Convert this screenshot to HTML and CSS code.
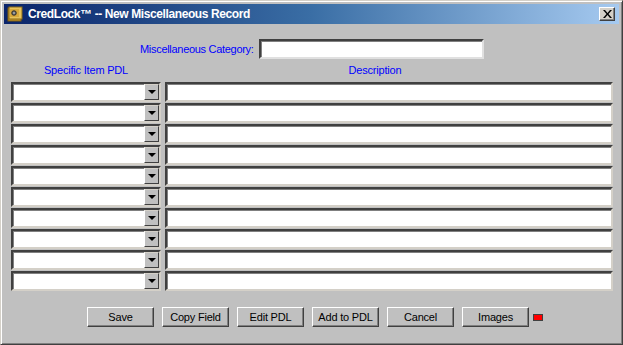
FILE: index.html
```html
<!DOCTYPE html>
<html lang="en">
<head>
  <meta charset="UTF-8" />
  <title>CredLock - New Miscellaneous Record</title>
  <link rel="stylesheet" href="styles.css">
</head>
<body>
  <div class="window">
    <div class="titlebar">
      <svg class="app-icon" width="16" height="16" viewBox="0 0 16 16">
        <rect x="1" y="2" width="13" height="13" fill="#c89b2c" stroke="#7a5a10" />
        <rect x="2" y="1" width="13" height="12" fill="#e8c35a" stroke="#8a6a18" />
        <rect x="3" y="3" width="9" height="8" fill="#d8a93c" />
        <circle cx="7" cy="7" r="2.3" fill="#666" stroke="#222" stroke-width="0.8" />
        <circle cx="7" cy="7" r="0.8" fill="#ddd" />
      </svg>
      <span class="title">CredLock™ -- New Miscellaneous Record</span>
      <button class="close-btn">
        <svg width="9" height="8" viewBox="0 0 9 8">
          <path d="M0 0h2l2.5 3 2.5-3h2L5.5 4 9 8H7L4.5 5 2 8H0l3.5-4z" fill="#000" />
        </svg>
      </button>
    </div>

    <div class="content">
      <div class="category-row">
        <label for="category">Miscellaneous Category:</label>
        <input type="text" id="category" class="field category-field" />
      </div>

      <div class="grid">
        <div class="col-head">Specific Item PDL</div>
        <div class="col-head desc-head">Description</div>

        <div class="combo"><span class="combo-text"></span><span class="combo-btn"><i></i></span></div>
        <input type="text" class="field" />
        <div class="combo"><span class="combo-text"></span><span class="combo-btn"><i></i></span></div>
        <input type="text" class="field" />
        <div class="combo"><span class="combo-text"></span><span class="combo-btn"><i></i></span></div>
        <input type="text" class="field" />
        <div class="combo"><span class="combo-text"></span><span class="combo-btn"><i></i></span></div>
        <input type="text" class="field" />
        <div class="combo"><span class="combo-text"></span><span class="combo-btn"><i></i></span></div>
        <input type="text" class="field" />
        <div class="combo"><span class="combo-text"></span><span class="combo-btn"><i></i></span></div>
        <input type="text" class="field" />
        <div class="combo"><span class="combo-text"></span><span class="combo-btn"><i></i></span></div>
        <input type="text" class="field" />
        <div class="combo"><span class="combo-text"></span><span class="combo-btn"><i></i></span></div>
        <input type="text" class="field" />
        <div class="combo"><span class="combo-text"></span><span class="combo-btn"><i></i></span></div>
        <input type="text" class="field" />
        <div class="combo"><span class="combo-text"></span><span class="combo-btn"><i></i></span></div>
        <input type="text" class="field" />
      </div>

      <div class="buttons">
        <button class="btn">Save</button>
        <button class="btn">Copy Field</button>
        <button class="btn">Edit PDL</button>
        <button class="btn">Add to PDL</button>
        <button class="btn">Cancel</button>
        <button class="btn">Images</button>
        <span class="led"></span>
      </div>
    </div>
  </div>
</body>
</html>
```
FILE: styles.css
```css
body {
  margin: 0;
  padding: 0;
  background: #c0c0c0;
  font-family: "Liberation Sans", Arial, sans-serif;
}

.window {
  width: 623px;
  height: 345px;
  box-sizing: border-box;
  background: #c0c0c0;
  border-top: 1px solid #d4d0c8;
  border-left: 1px solid #d4d0c8;
  border-right: 1px solid #404040;
  border-bottom: 1px solid #404040;
  box-shadow: inset 1px 1px 0 #ffffff, inset -1px -1px 0 #808080;
  padding: 2px 3px 2px 2px;
  display: flex;
  flex-direction: column;
}

.titlebar {
  height: 20px;
  display: flex;
  align-items: center;
  padding: 0 2px 0 3px;
  background: linear-gradient(to right, #0a246a, #3a6ea5 50%, #a6caf0);
  margin: 1px 0 0 1px;
}

.app-icon {
  flex: none;
  margin-right: 5px;
}

.title {
  color: #ffffff;
  font-weight: bold;
  font-size: 12px;
  letter-spacing: -0.4px;
  flex: 1;
}

.close-btn {
  width: 16px;
  height: 14px;
  padding: 0;
  background: #d4d0c8;
  border: 1px solid;
  border-color: #ffffff #404040 #404040 #ffffff;
  box-shadow: inset -1px -1px 0 #808080;
  display: flex;
  align-items: center;
  justify-content: center;
  margin-right: 2px;
}

.content {
  flex: 1;
  padding: 0 6px 0 8px;
  display: flex;
  flex-direction: column;
}

.category-row {
  display: flex;
  align-items: center;
  margin-top: 15px;
  padding-left: 129px;
}

.category-row label {
  color: #0000ff;
  font-size: 11px;
  letter-spacing: -0.3px;
  margin-right: 5px;
}

.field {
  box-sizing: border-box;
  height: 20px;
  margin: 0;
  padding: 1px 3px;
  background: #ffffff;
  border: 2px solid;
  border-color: #404040 #d4d0c8 #d4d0c8 #404040;
  box-shadow: inset 1px 1px 0 #808080;
  font-family: "Liberation Sans", Arial, sans-serif;
  font-size: 12px;
  outline: none;
}

.category-field {
  width: 225px;
  border-color: #404040 #e0e0e0 #e0e0e0 #404040;
}

.grid {
  display: grid;
  grid-template-columns: 150px 1fr;
  column-gap: 4px;
  row-gap: 1px;
  margin-top: 4px;
}

.col-head {
  color: #0000ff;
  font-size: 11px;
  letter-spacing: -0.2px;
  text-align: center;
  height: 15px;
  line-height: 15px;
  margin-bottom: 3px;
}

.desc-head {
  padding-right: 28px;
}

.grid .field {
  width: 100%;
  height: 20px;
}

.combo {
  box-sizing: border-box;
  height: 20px;
  display: flex;
  background: #ffffff;
  border: 2px solid;
  border-color: #404040 #d4d0c8 #d4d0c8 #404040;
  box-shadow: inset 1px 1px 0 #808080;
}

.combo-text {
  flex: 1;
}

.combo-btn {
  width: 15px;
  box-sizing: border-box;
  background: #c0c0c0;
  border: 1px solid;
  border-color: #d4d0c8 #404040 #404040 #ffffff;
  display: flex;
  align-items: center;
  justify-content: center;
}

.combo-btn i {
  width: 0;
  height: 0;
  border-left: 4px solid transparent;
  border-right: 4px solid transparent;
  border-top: 4px solid #000000;
}

.buttons {
  display: flex;
  align-items: center;
  gap: 8px;
  margin-top: 16px;
  padding-left: 76px;
}

.btn {
  width: 67px;
  height: 20px;
  padding: 0;
  background: #c0c0c0;
  border: 1px solid;
  border-color: #ffffff #404040 #404040 #ffffff;
  box-shadow: inset -1px -1px 0 #808080;
  font-family: "Liberation Sans", Arial, sans-serif;
  font-size: 11px;
  letter-spacing: -0.2px;
  color: #000000;
}

.led {
  width: 8px;
  height: 5px;
  background: #ff0000;
  border: 1px solid #404040;
  margin-left: -4px;
}
```
